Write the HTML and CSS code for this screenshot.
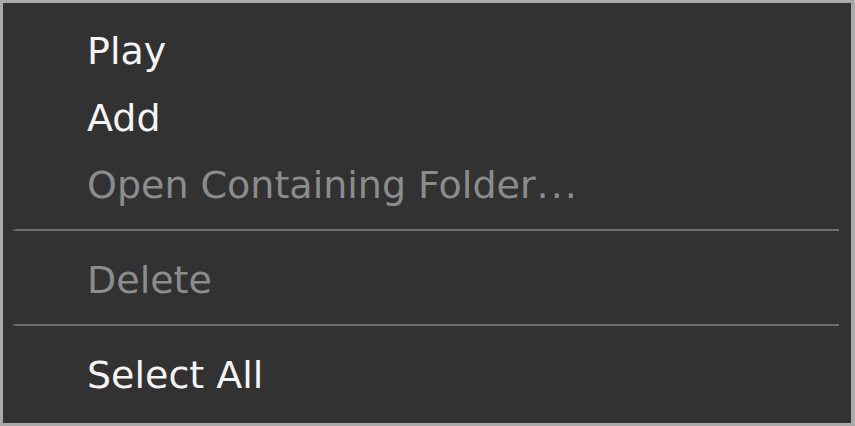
FILE: index.html
```html
<!DOCTYPE html>
<html lang="en">
  <head>
    <meta charset="UTF-8" />
    <meta name="viewport" content="width=device-width, initial-scale=1.0" />
    <title>Context Menu</title>
    <link rel="stylesheet" href="styles.css">
  </head>
  <body>
    <ul class="menu">
      <li class="item">Play</li>
      <li class="item">Add</li>
      <li class="item disabled">Open Containing Folder<span class="dots">...</span></li>
      <li class="separator"></li>
      <li class="item disabled">Delete</li>
      <li class="separator"></li>
      <li class="item">Select All</li>
    </ul>
  </body>
</html>
```

FILE: styles.css
```css
html,
body {
  margin: 0;
  height: 100%;
  overflow: hidden;
}
body {
  font-family: "DejaVu Sans", Verdana, sans-serif;
  background: #a9a9a9;
}
.menu {
  box-sizing: border-box;
  width: 855px;
  height: 426px;
  margin: 0;
  padding: 15px 0 0;
  list-style: none;
  background: #323232;
  border: 3px solid #a9a9a9;
  border-right-width: 4px;
}
.item {
  padding-left: 84px;
  font-size: 38px;
  line-height: 67px;
  height: 67px;
  color: #f4f4f4;
  white-space: nowrap;
  &.disabled {
    color: #8c8c8c;
  }
  .dots {
    margin-left: 1px;
    letter-spacing: 2px;
  }
}
.separator {
  height: 2px;
  margin: 10px 12px 16px 9px;
  background: #6e6e6e;
  border-left: 3px solid #4a4a4a;
}
```
